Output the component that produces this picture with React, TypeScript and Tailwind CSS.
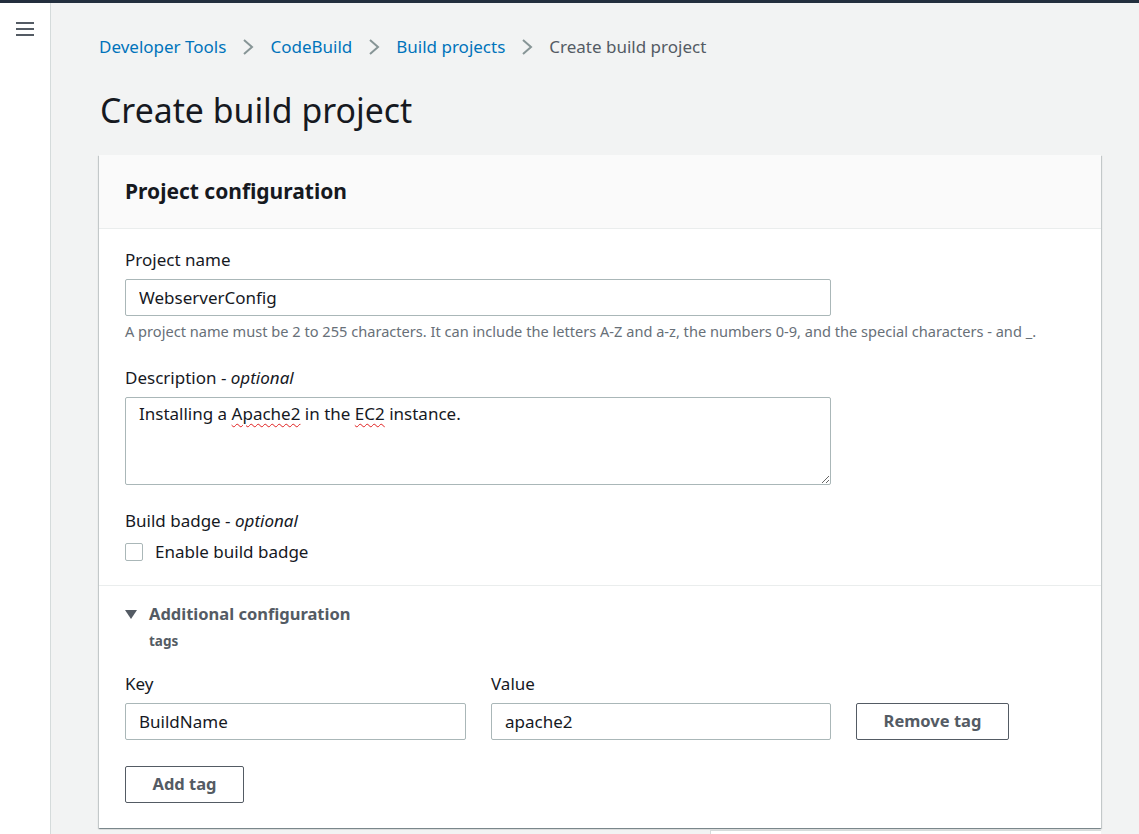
import React from "react";

const font = { fontFamily: '"Noto Sans", "Open Sans", Arial, sans-serif' };

function Chevron() {
  return (
    <svg width="14" height="18" viewBox="0 0 14 18" className="mx-[15px]">
      <path d="M3 2 L11 9 L3 16" fill="none" stroke="#879596" strokeWidth="2" />
    </svg>
  );
}

export default function App() {
  return (
    <div className="w-[1139px] h-[834px] overflow-hidden flex flex-col bg-[#f2f3f3] text-[#16191f]" style={font}>
      <div className="h-[3px] bg-[#232f3e] shrink-0" />
      <div className="flex flex-1 min-h-0">
        <div className="w-[51px] shrink-0 bg-white border-r border-[#d5dbdb] pt-[18px] flex justify-center">
          <svg width="18" height="16" viewBox="0 0 18 16" className="-ml-[1px]">
            <rect x="0" y="1" width="18" height="2" fill="#545b64" />
            <rect x="0" y="7" width="18" height="2" fill="#545b64" />
            <rect x="0" y="13" width="18" height="2" fill="#545b64" />
          </svg>
        </div>
        <div className="flex-1 min-w-0 pl-[48px] pr-[38px] relative">
          <nav className="flex items-center h-[24px] mt-[32px] text-[17px]">
            <span className="text-[#0073bb]">Developer Tools</span>
            <Chevron />
            <span className="text-[#0073bb]">CodeBuild</span>
            <Chevron />
            <span className="text-[#0073bb]">Build projects</span>
            <Chevron />
            <span className="text-[#545b64]">Create build project</span>
          </nav>
          <h1 className="text-[33.8px] leading-[44px] mt-[29px] ml-[1px] text-[#16191f]">Create build project</h1>
          <div className="mt-[23px] bg-white shadow-[0_1px_1px_0_rgba(0,28,36,0.3),1px_1px_1px_0_rgba(0,28,36,0.15),-1px_1px_1px_0_rgba(0,28,36,0.15)]">
            <div className="h-[74px] bg-[#fafafa] border-b border-[#eaeded] flex items-center px-[26px]">
              <h2 className="text-[21px] font-bold text-[#16191f]">Project configuration</h2>
            </div>
            <div className="px-[26px] pt-[19px] pb-[21px]">
              <div className="text-[17px] leading-[24px] text-[#16191f]">Project name</div>
              <input
                readOnly
                value="WebserverConfig"
                className="mt-[7px] block w-[706px] h-[37px] border border-[#aab7b8] rounded-[2px] px-[13px] text-[17px] text-[#16191f] outline-none"
                style={font}
              />
              <div className="text-[14.6px] leading-[20px] text-[#687078] mt-[5px] whitespace-nowrap">
                A project name must be 2 to 255 characters. It can include the letters A-Z and a-z, the numbers 0-9, and the special characters - and _.
              </div>
              <div className="text-[17px] leading-[24px] mt-[25px]">
                Description - <i>optional</i>
              </div>
              <div className="mt-[7px] w-[706px] h-[88px] border border-[#aab7b8] rounded-[2px] px-[13px] pt-[4px] text-[17px] leading-[24px] text-[#16191f] resize overflow-auto">
                Installing a{" "}
                <span className="underline decoration-wavy decoration-[#e02020] decoration-1 underline-offset-[3px]">Apache2</span>{" "}
                in the{" "}
                <span className="underline decoration-wavy decoration-[#e02020] decoration-1 underline-offset-[3px]">EC2</span>{" "}
                instance.
              </div>
              <div className="text-[17px] leading-[24px] mt-[24px]">
                Build badge - <i>optional</i>
              </div>
              <div className="flex items-center mt-[7px]">
                <div className="w-[18px] h-[18px] border border-[#aab7b8] rounded-[2px] bg-white" />
                <span className="ml-[12px] text-[17px] leading-[24px]">Enable build badge</span>
              </div>
            </div>
            <div className="border-t border-[#eaeded] px-[26px] pt-[16px] pb-[25px]">
              <div className="flex items-center">
                <svg width="12" height="10" viewBox="0 0 12 10">
                  <path d="M0 1 L12 1 L6 10 Z" fill="#545b64" />
                </svg>
                <span className="ml-[12px] text-[16.5px] font-bold text-[#545b64] leading-[24px]">Additional configuration</span>
              </div>
              <div className="ml-[24px] mt-[6px] text-[13.5px] font-bold text-[#545b64] leading-[18px]">tags</div>
              <div className="flex mt-[22px] items-end">
                <div className="w-[341px]">
                  <div className="text-[17px] leading-[24px]">Key</div>
                  <input
                    readOnly
                    value="BuildName"
                    className="mt-[7px] block w-[341px] h-[37px] border border-[#aab7b8] rounded-[2px] px-[13px] text-[17px] text-[#16191f] outline-none"
                    style={font}
                  />
                </div>
                <div className="w-[340px] ml-[25px]">
                  <div className="text-[17px] leading-[24px]">Value</div>
                  <input
                    readOnly
                    value="apache2"
                    className="mt-[7px] block w-[340px] h-[37px] border border-[#aab7b8] rounded-[2px] px-[13px] text-[17px] text-[#16191f] outline-none"
                    style={font}
                  />
                </div>
                <button
                  className="ml-[25px] w-[153px] h-[37px] border border-[#545b64] rounded-[2px] bg-white text-[16.5px] font-bold text-[#545b64]"
                  style={font}
                >
                  Remove tag
                </button>
              </div>
              <button
                className="mt-[26px] w-[119px] h-[37px] border border-[#545b64] rounded-[2px] bg-white text-[16.5px] font-bold text-[#545b64]"
                style={font}
              >
                Add tag
              </button>
            </div>
          </div>
          <div className="ml-[611px] mt-[2px] h-[20px] bg-white border-t border-l border-[#d5dbdb]" />
        </div>
      </div>
    </div>
  );
}
